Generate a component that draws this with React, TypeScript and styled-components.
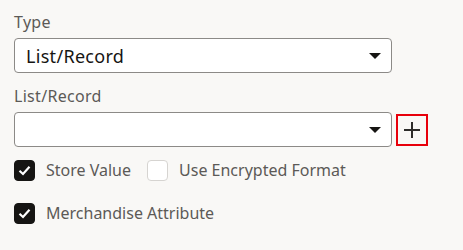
import React from 'react'
import styled, { createGlobalStyle } from 'styled-components'

const GlobalStyle = createGlobalStyle`
    html, body {
        margin: 0;
        padding: 0;
        background: #f9f8f6;
    }
    body {
        font-family: "Noto Sans", "Open Sans", sans-serif;
    }
`

const Form = styled.div`
    width: 463px;
    height: 250px;
    box-sizing: border-box;
    padding: 12px 0 0 14px;
    display: flex;
    flex-direction: column;
`

const Field = styled.div`
    display: flex;
    flex-direction: column;
    margin-bottom: 13px;
`

const Label = styled.label`
    font-size: 16px;
    line-height: 20px;
    letter-spacing: 0.3px;
    color: #5c5a57;
    margin-bottom: 6px;
`

const ControlRow = styled.div`
    display: flex;
    align-items: center;
    gap: 4px;
`

const Select = styled.div`
    width: 378px;
    height: 35px;
    box-sizing: border-box;
    border: 1px solid #8c8a87;
    border-radius: 4px;
    background: #fff;
    display: flex;
    align-items: center;
    padding: 0 10px 0 11px;
`

const SelectValue = styled.span`
    flex: 1;
    font-size: 18px;
    line-height: 24px;
    letter-spacing: 0.3px;
    color: #161513;
`

const Caret = styled.span`
    width: 0;
    height: 0;
    border-left: 6.5px solid transparent;
    border-right: 6.5px solid transparent;
    border-top: 6px solid #161513;
`

const AddButton = styled.button`
    width: 32px;
    height: 32px;
    box-sizing: border-box;
    border: 2px solid #e8000b;
    background: transparent;
    padding: 0;
    display: flex;
    align-items: center;
    justify-content: center;
`

const CheckRow = styled.div`
    display: flex;
    align-items: center;
    margin-bottom: 22px;
`

const Check = styled.span<{ checked?: boolean }>`
    width: 21px;
    height: 21px;
    box-sizing: border-box;
    border-radius: 4px;
    border: 1px solid ${p => (p.checked ? '#161513' : '#d6d4d1')};
    background: ${p => (p.checked ? '#161513' : '#fff')};
    display: flex;
    align-items: center;
    justify-content: center;
`

const CheckText = styled.span`
    font-size: 16px;
    line-height: 21px;
    color: #5c5a57;
    margin: 0 16px 0 11px;
`

const CheckBox = ({ checked, label }: { checked?: boolean; label: string }) => (
    <>
        <Check checked={checked}>
            {checked && (
                <svg width="15" height="15" viewBox="0 0 15 15">
                    <path d="M2.5 7.8 L6 11 L12.5 3.8" fill="none" stroke="#fff" strokeWidth="2.2" />
                </svg>
            )}
        </Check>
        <CheckText>{label}</CheckText>
    </>
)

const App = () => {
    return (
        <>
            <GlobalStyle />
            <Form>
                <Field>
                    <Label>Type</Label>
                    <ControlRow>
                        <Select>
                            <SelectValue>List/Record</SelectValue>
                            <Caret />
                        </Select>
                    </ControlRow>
                </Field>
                <Field>
                    <Label>List/Record</Label>
                    <ControlRow>
                        <Select>
                            <SelectValue />
                            <Caret />
                        </Select>
                        <AddButton>
                            <svg width="18" height="18" viewBox="0 0 18 18">
                                <path d="M9 1 V17 M1 9 H17" stroke="#2d2c2a" strokeWidth="2" />
                            </svg>
                        </AddButton>
                    </ControlRow>
                </Field>
                <CheckRow>
                    <CheckBox checked label="Store Value" />
                    <CheckBox label="Use Encrypted Format" />
                </CheckRow>
                <CheckRow>
                    <CheckBox checked label="Merchandise Attribute" />
                </CheckRow>
            </Form>
        </>
    )
}

export default App
